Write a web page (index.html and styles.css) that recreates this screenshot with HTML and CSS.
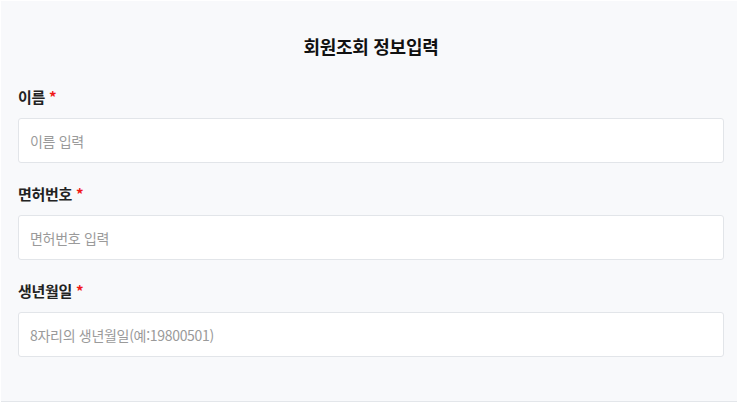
FILE: index.html
```html
<!DOCTYPE html>
<html lang="ko">
<head>
<meta charset="utf-8">
<link rel="stylesheet" href="styles.css">
</head>
<body>
<div class="panel">
  <h1 class="title">회원조회 정보입력</h1>
  <form class="form">
    <div class="field">
      <label class="label">이름 <span class="req">*</span></label>
      <input class="input" type="text" placeholder="이름 입력">
    </div>
    <div class="field">
      <label class="label">면허번호 <span class="req">*</span></label>
      <input class="input" type="text" placeholder="면허번호 입력">
    </div>
    <div class="field">
      <label class="label">생년월일 <span class="req">*</span></label>
      <input class="input" type="text" placeholder="8자리의 생년월일(예:19800501)">
    </div>
  </form>
</div>
</body>
</html>
```
FILE: styles.css
```css
html, body {
  margin: 0;
  padding: 0;
  background: #ffffff;
}
body {
  padding: 1px 0 0 1px;
  font-family: "Noto Sans CJK KR", "Noto Sans", sans-serif;
}
.panel {
  background: #f8f9fb;
  border-bottom: 1px solid #e3e6ea;
  padding: 33px 13px 44px 17px;
}
.title {
  margin: 0 0 28px;
  text-align: center;
  font-size: 18px;
  line-height: 24px;
  font-weight: 700;
  color: #111;
  letter-spacing: -0.3px;
}
.form {
  display: flex;
  flex-direction: column;
  gap: 20px;
}
.field {
  display: flex;
  flex-direction: column;
  gap: 10px;
}
.label {
  font-size: 15px;
  line-height: 22px;
  font-weight: 700;
  color: #222;
  letter-spacing: -0.3px;
}
.req {
  color: #f01818;
}
.input {
  box-sizing: border-box;
  height: 45px;
  width: 100%;
  margin: 0;
  padding: 0 11px;
  border: 1px solid #e2e5e9;
  border-radius: 3px;
  background: #fff;
  font-family: "Noto Sans CJK KR", "Noto Sans", sans-serif;
  font-size: 14px;
  color: #222;
  letter-spacing: -0.3px;
  outline: none;
}
.input::placeholder {
  color: #9a9a9a;
}
```
